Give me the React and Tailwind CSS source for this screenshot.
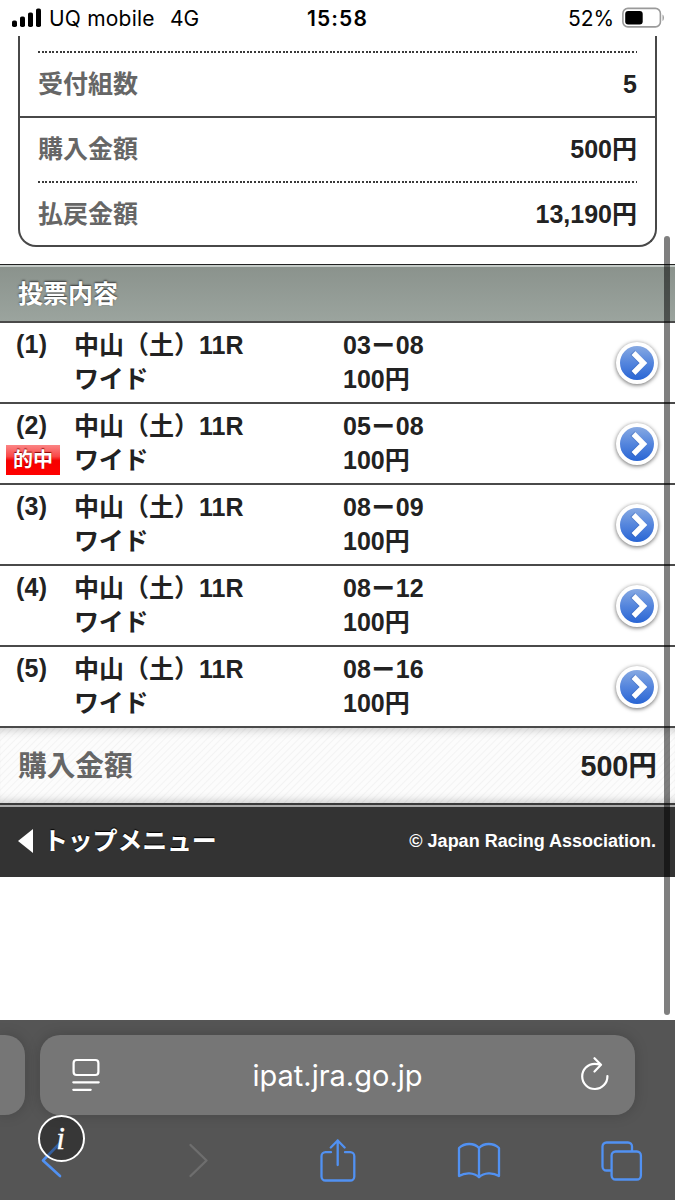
import React from 'react';

const bets = [
  { id: 1, numbers: ['03', '08'], hit: false },
  { id: 2, numbers: ['05', '08'], hit: true },
  { id: 3, numbers: ['08', '09'], hit: false },
  { id: 4, numbers: ['08', '12'], hit: false },
  { id: 5, numbers: ['08', '16'], hit: false },
];

const StatusBar = () => (
  <header className="h-9 flex items-center bg-white text-black font-['Inter',sans-serif] text-[21px] leading-9 whitespace-nowrap">
    <svg className="ml-3 mr-[7px] shrink-0" width="30" height="20" viewBox="0 0 30 20">
      <rect x="0" y="12.5" width="5" height="6.5" rx="1.8" />
      <rect x="8" y="8.5" width="5" height="10.5" rx="1.8" />
      <rect x="16" y="4.5" width="5" height="14.5" rx="1.8" />
      <rect x="24" y="0.5" width="5" height="18.5" rx="1.8" />
    </svg>
    <span className="w-[121px] pt-0.5 tracking-[0.2px]">UQ mobile</span>
    <span className="w-[137px] pt-0.5">4G</span>
    <span className="w-[261px] pt-0.5 font-semibold tracking-[1.1px]">15:58</span>
    <span className="w-[54px] pt-0.5">52%</span>
    <svg className="shrink-0" width="44" height="22" viewBox="0 0 44 22">
      <rect x="0.9" y="1.4" width="37.5" height="18.5" rx="5" fill="none" stroke="#9a9a9a" strokeWidth="1.6" />
      <rect x="3.2" y="3.9" width="17.5" height="13.6" rx="3" />
      <path d="M40.5 7.5v6.4c1.9-.7 1.9-5.7 0-6.4z" fill="#9a9a9a" />
    </svg>
  </header>
);

const DottedLine = () => (
  <div className="h-0.5 bg-[repeating-linear-gradient(90deg,#3a3a3a_0px,#3a3a3a_2px,transparent_2px,transparent_3.6px)]"></div>
);

const SummaryRow = ({ label, value }) => (
  <div className="h-[63px] flex justify-between items-center">
    <span className="text-[#666]">{label}</span>
    <span>{value}</span>
  </div>
);

const ArrowButton = () => (
  <button className="w-[42px] h-[42px] mr-[17px] rounded-full bg-white p-1 shadow-[0_1px_4px_rgba(0,0,0,0.6)]">
    <span className="w-full h-full rounded-full flex items-center justify-center bg-linear-to-b from-[#87a9e2] via-[#5485dd] to-[#2865d4]">
      <svg width="34" height="34" viewBox="0 0 34 34" fill="none">
        <path d="M12.500 6.500l10.500 10.500-10.500 10.500" stroke="#2450a0" strokeOpacity=".3" strokeWidth="6.500" />
        <path d="M13.500 7l10 10-10 10" stroke="#fff" strokeWidth="5.400" />
      </svg>
    </span>
  </button>
);

const BetRow = ({ bet }) => (
  <li className="h-[81px] flex border-b-2 border-[#4a4a4a] leading-[34px]">
    <div className="w-[74px] pt-[5px]">
      <div className="pl-4 leading-[33px] tracking-[0.2px]">({bet.id})</div>
      {bet.hit && (
        <div className="ml-1.5 mt-[3px] w-[54px] h-[30px] text-center text-white text-[20px] leading-[30px] bg-[linear-gradient(180deg,#fb8585_0%,#f94848_38%,#f50000_52%,#ff0000_100%)] [text-shadow:0_-1px_1px_#8b0000]">
          的中
        </div>
      )}
    </div>
    <div className="w-[269px] pt-[5px]">
      <div>中山（土）11R</div>
      <div className="tracking-[-0.3px]">ワイド</div>
    </div>
    <div className="flex-1 pt-[5px]">
      <div>
        {bet.numbers[0]}
        <span className="[-webkit-text-stroke:0.9px_#222]">－</span>
        {bet.numbers[1]}
      </div>
      <div>100円</div>
    </div>
    <div className="flex items-center">
      <ArrowButton />
    </div>
  </li>
);

const BrowserBar = () => (
  <footer className="relative h-[180px] overflow-hidden bg-[#555] pt-[15px] text-white">
    <div className="flex gap-[15px]">
      <div className="w-[25px] h-20 rounded-r-[20px] bg-[#767676] shadow-[0_0_14px_rgba(0,0,0,0.18)]"></div>
      <div className="w-[595px] h-20 rounded-[20px] bg-[#767676] shadow-[0_0_14px_rgba(0,0,0,0.18)] flex items-center justify-between pl-8 pr-[25px]">
        <svg width="28" height="34" viewBox="0 0 28 34" fill="none" stroke="#fff" strokeWidth="2.2" strokeLinecap="round">
          <rect x="1.6" y="2" width="24.8" height="15" rx="3" />
          <path d="M1.3 24.3h25.4M1.3 31.8h17.4" />
        </svg>
        <span className="mr-[5px] pt-0.5 font-['Inter',sans-serif] text-[29px]">ipat.jra.go.jp</span>
        <svg width="30" height="36" viewBox="0 0 30 36" fill="none" stroke="#fff" strokeWidth="2.2" strokeLinecap="round" strokeLinejoin="round">
          <path d="M27.4 19a12.6 12.6 0 1 1-12.6-12.2c2 0 3.6.2 5 .8M14.5 1.2l6.5 6.6-6.5 6.7" />
        </svg>
      </div>
    </div>
    <nav className="mt-6 flex text-[#5191f2]">
      <svg className="ml-[38px] mt-px" width="28" height="38" viewBox="0 0 28 38" fill="none" stroke="currentColor" strokeWidth="2.6" strokeLinecap="round" strokeLinejoin="round">
        <path d="M21 4L5 20.5 22 36" />
      </svg>
      <svg className="ml-[121px] mt-px" width="28" height="38" viewBox="0 0 28 38" fill="none" stroke="#6e6e6e" strokeWidth="2.4" strokeLinecap="round" strokeLinejoin="round">
        <path d="M3.5 5L19.5 20.5 3.5 36" />
      </svg>
      <svg className="ml-[105px]" width="36" height="44" viewBox="0 0 36 44" fill="none" stroke="currentColor" strokeWidth="2.3" strokeLinecap="round" strokeLinejoin="round">
        <path d="M11 13.2H5.5a4 4 0 0 0-4 4v20.3a4 4 0 0 0 4 4h24.8a4 4 0 0 0 4-4V17.2a4 4 0 0 0-4-4H25M17.7 26V1.500M10.8 8.500l6.9-7 6.9 7" />
      </svg>
      <svg className="ml-[101px] mt-[3px]" width="44" height="38" viewBox="0 0 44 38" fill="none" stroke="currentColor" strokeWidth="2.3" strokeLinejoin="round">
        <path d="M22 35.2C17 30.5 8.5 30 2 34V6C7.5 .8 17 .5 22 6c5-5.500 14.500-5.200 20 0v28c-6.500-4-15-3.500-20 1.200zM22 6v29" />
      </svg>
      <svg className="ml-[100px] mt-0.5" width="42" height="40" viewBox="0 0 42 40" fill="none" stroke="currentColor" strokeWidth="2.3">
        <path d="M10.6 29.5H5.500a4 4 0 0 1-4-4V5.500a4 4 0 0 1 4-4h21.500a4 4 0 0 1 4 4v5" />
        <rect x="10.6" y="10.5" width="29.3" height="28" rx="4" />
      </svg>
    </nav>
    {/* floating info badge */}
    <div className="absolute left-[38px] top-[95px] w-[47px] h-[47px] rounded-full border-2 border-white bg-black/35 text-center font-['Liberation_Serif',serif] italic text-[31px] leading-[44px] [-webkit-text-stroke:0.4px_#fff]">
      <span className="relative -left-px">i</span>
    </div>
  </footer>
);

export default function App() {
  return (
    <div className="relative w-[675px] h-[1200px] overflow-hidden bg-white">
      <StatusBar />
      <main className="h-[984px] font-['Liberation_Sans','Noto_Sans_CJK_JP',sans-serif] font-bold text-[25px] text-[#222]">
        <section className="mx-[18px] h-[211px] border-2 border-t-0 border-[#484848] rounded-b-[18px] pt-[15px]">
          <div className="px-[18px]">
            <DottedLine />
            <SummaryRow label="受付組数" value="5" />
          </div>
          <div className="h-0.5 bg-[#484848]"></div>
          <div className="px-[18px]">
            <SummaryRow label="購入金額" value="500円" />
            <DottedLine />
            <SummaryRow label="払戻金額" value="13,190円" />
          </div>
        </section>

        <h2 className="mt-[17px] h-[59px] border-t border-b-2 border-t-[#222] border-b-[#4a4a4a] bg-linear-to-b from-[#8a928c] to-[#9ba49e] pl-[18px] text-white leading-[58px] shadow-[inset_0_2px_0_#c3cac6] [text-shadow:0_-1px_2px_#333]">
          投票内容
        </h2>
        <ul>
          {bets.map((bet) => (
            <BetRow key={bet.id} bet={bet} />
          ))}
        </ul>

        <div className="h-[75px] px-[18px] pt-[3px] flex justify-between items-center text-[28.7px] bg-[repeating-linear-gradient(135deg,#fcfcfc_0px,#fcfcfc_3px,#f3f3f3_4px,#fcfcfc_5px)] shadow-[inset_0_10px_10px_-8px_rgba(0,0,0,0.2),inset_0_-10px_10px_-8px_rgba(0,0,0,0.2)]">
          <span className="text-[#666]">購入金額</span>
          <span>500円</span>
        </div>
        <div className="h-[74px] flex justify-between items-center border-t-2 border-[#3a3a3a] bg-[#333] shadow-[inset_0_2px_0_#aaa] px-[18px] text-white">
          <div className="flex items-center [text-shadow:0_-1px_1px_#000]">
            <svg className="mr-2.5" width="15" height="24" viewBox="0 0 15 24" fill="#fff">
              <path d="M15 0v24L0 12z" />
            </svg>
            <span className="pt-0.5 text-[25px] tracking-[-0.2px]">トップメニュー</span>
          </div>
          <span className="mr-px text-[18px]">© Japan Racing Association.</span>
        </div>
      </main>
      <BrowserBar />
      {/* page scroll indicator */}
      <div className="absolute left-[664px] top-[236px] w-[6px] h-[779px] rounded-full bg-black/50"></div>
    </div>
  );
}
